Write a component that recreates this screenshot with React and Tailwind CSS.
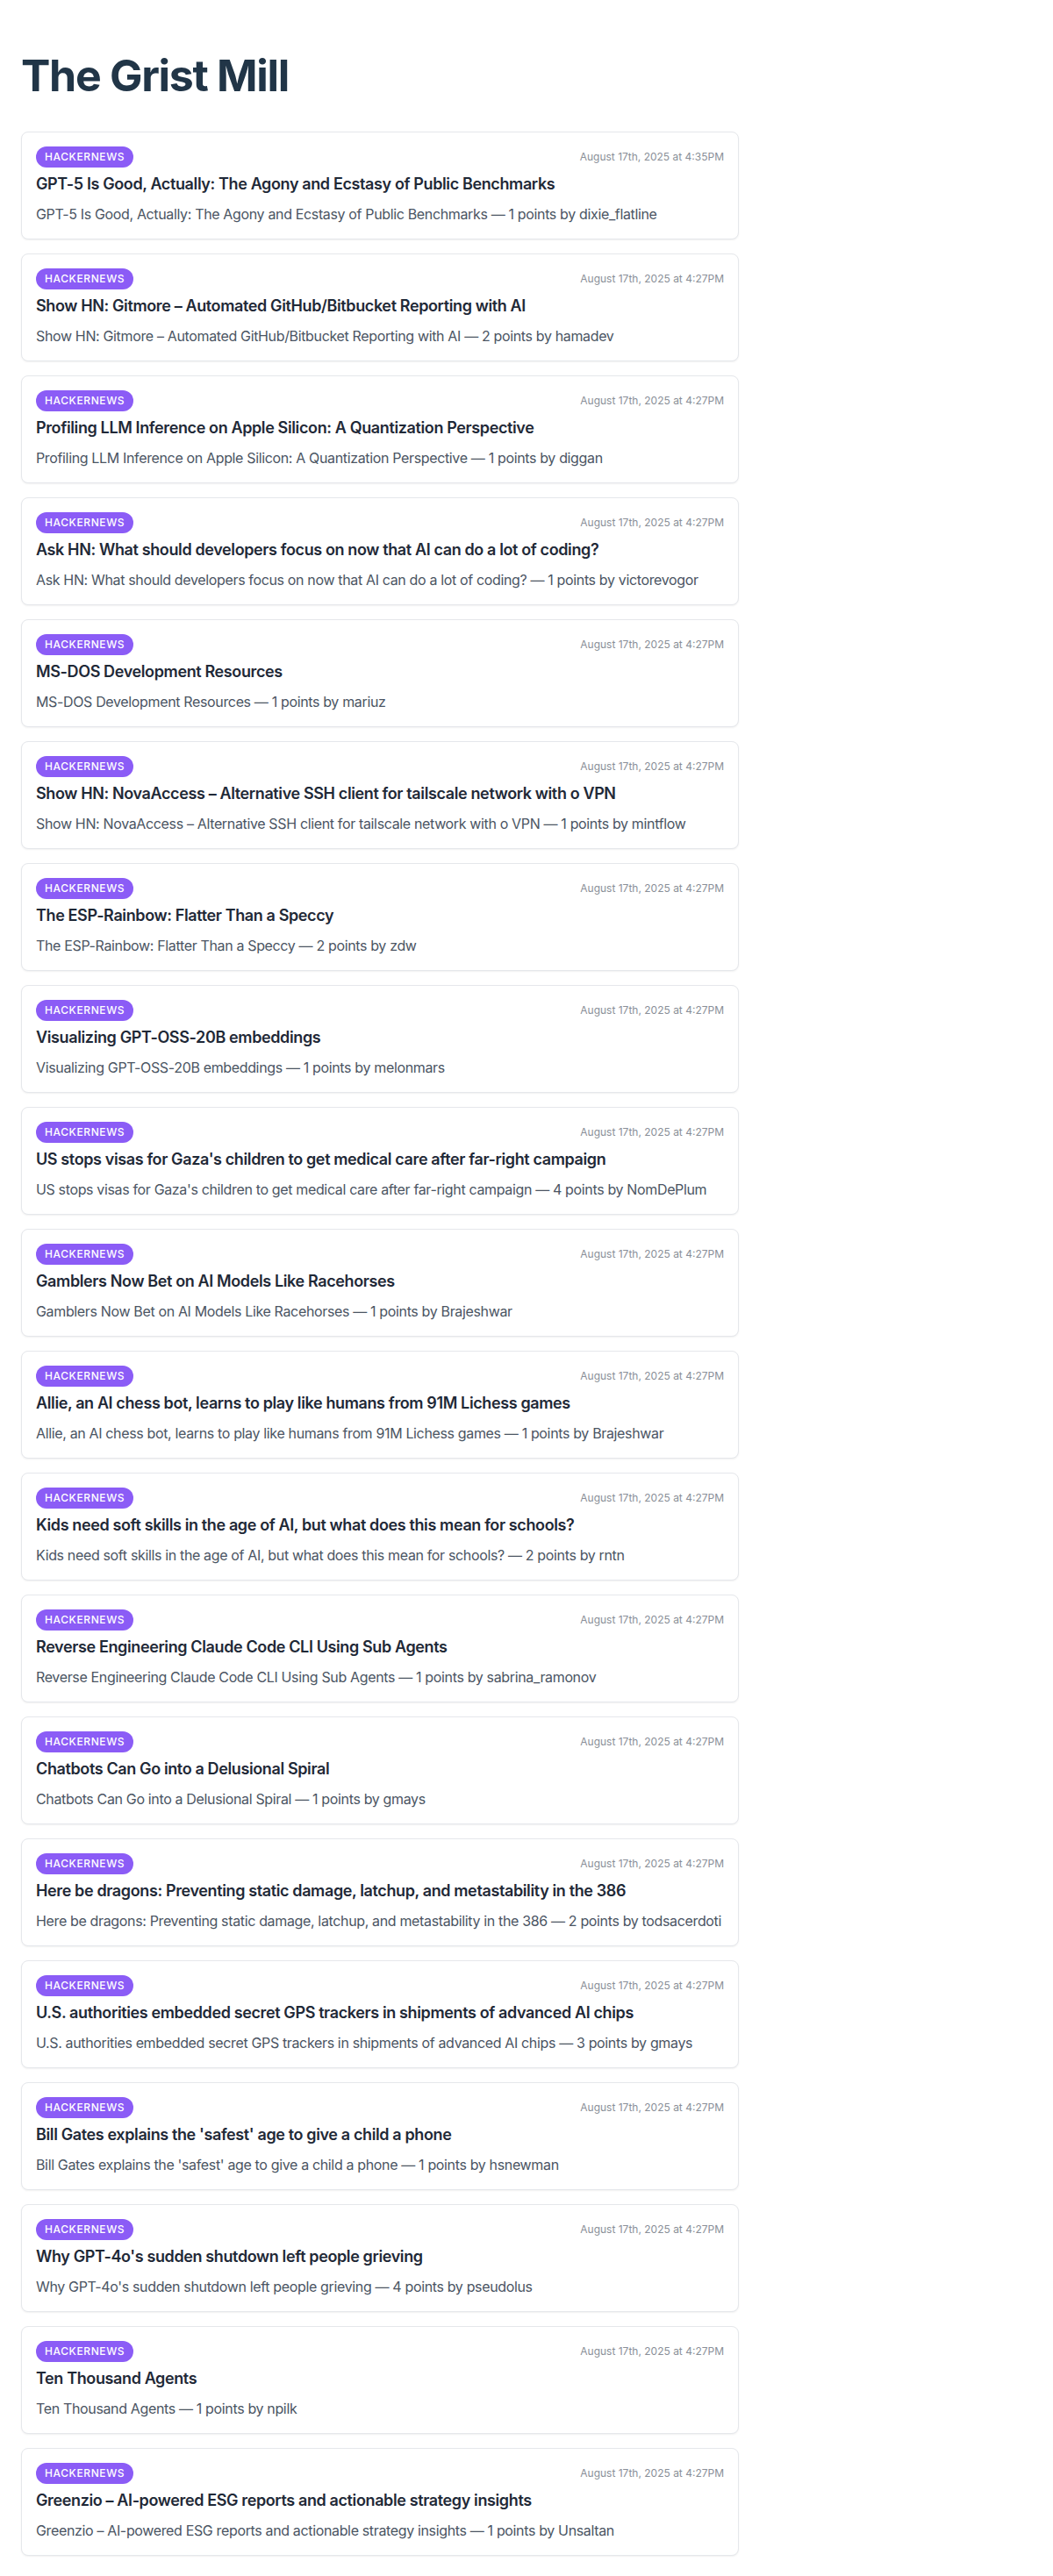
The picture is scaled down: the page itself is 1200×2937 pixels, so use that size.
import React from "react";

const items = [
  ["GPT-5 Is Good, Actually: The Agony and Ecstasy of Public Benchmarks", 1, "dixie_flatline", "4:35PM"],
  ["Show HN: Gitmore – Automated GitHub/Bitbucket Reporting with AI", 2, "hamadev"],
  ["Profiling LLM Inference on Apple Silicon: A Quantization Perspective", 1, "diggan"],
  ["Ask HN: What should developers focus on now that AI can do a lot of coding?", 1, "victorevogor"],
  ["MS-DOS Development Resources", 1, "mariuz"],
  ["Show HN: NovaAccess – Alternative SSH client for tailscale network with o VPN", 1, "mintflow"],
  ["The ESP-Rainbow: Flatter Than a Speccy", 2, "zdw"],
  ["Visualizing GPT-OSS-20B embeddings", 1, "melonmars"],
  ["US stops visas for Gaza's children to get medical care after far-right campaign", 4, "NomDePlum"],
  ["Gamblers Now Bet on AI Models Like Racehorses", 1, "Brajeshwar"],
  ["Allie, an AI chess bot, learns to play like humans from 91M Lichess games", 1, "Brajeshwar"],
  ["Kids need soft skills in the age of AI, but what does this mean for schools?", 2, "rntn"],
  ["Reverse Engineering Claude Code CLI Using Sub Agents", 1, "sabrina_ramonov"],
  ["Chatbots Can Go into a Delusional Spiral", 1, "gmays"],
  ["Here be dragons: Preventing static damage, latchup, and metastability in the 386", 2, "todsacerdoti"],
  ["U.S. authorities embedded secret GPS trackers in shipments of advanced AI chips", 3, "gmays"],
  ["Bill Gates explains the 'safest' age to give a child a phone", 1, "hsnewman"],
  ["Why GPT-4o's sudden shutdown left people grieving", 4, "pseudolus"],
  ["Ten Thousand Agents", 1, "npilk"],
  ["Greenzio – AI-powered ESG reports and actionable strategy insights", 1, "Unsaltan"],
];

export default function App() {
  return (
    <div
      className="min-h-screen bg-white px-6 pt-[56px] pb-8"
      style={{ fontFamily: "Inter, 'Noto Sans', sans-serif" }}
    >
      <h1 className="text-[50px] leading-[60px] font-bold text-[#213547] tracking-[-0.026em] mb-[34px]">
        The Grist Mill
      </h1>
      <div className="w-[818px] flex flex-col gap-4">
        {items.map(([title, pts, user, time], i) => (
          <div
            key={i}
            className="rounded-lg border border-gray-200 bg-white p-4 shadow-[0_1px_2px_rgba(0,0,0,0.06)]"
          >
            <div className="flex items-center justify-between h-6">
              <span className="inline-flex items-center h-6 rounded-full bg-[#8b5cf6] px-[10px] text-xs font-medium tracking-[0.05em] text-white">
                HACKERNEWS
              </span>
              <span className="text-xs text-[#8a8f98]">
                August 17th, 2025 at {time || "4:27PM"}
              </span>
            </div>
            <div className="mt-[5px] text-lg leading-7 font-semibold tracking-[-0.021em] text-[#1f2937]">
              {title}
            </div>
            <div className="mt-2 text-base leading-6 tracking-[-0.022em] text-[#4b5563] whitespace-nowrap">
              {title} — {pts} points by {user}
            </div>
          </div>
        ))}
      </div>
    </div>
  );
}
